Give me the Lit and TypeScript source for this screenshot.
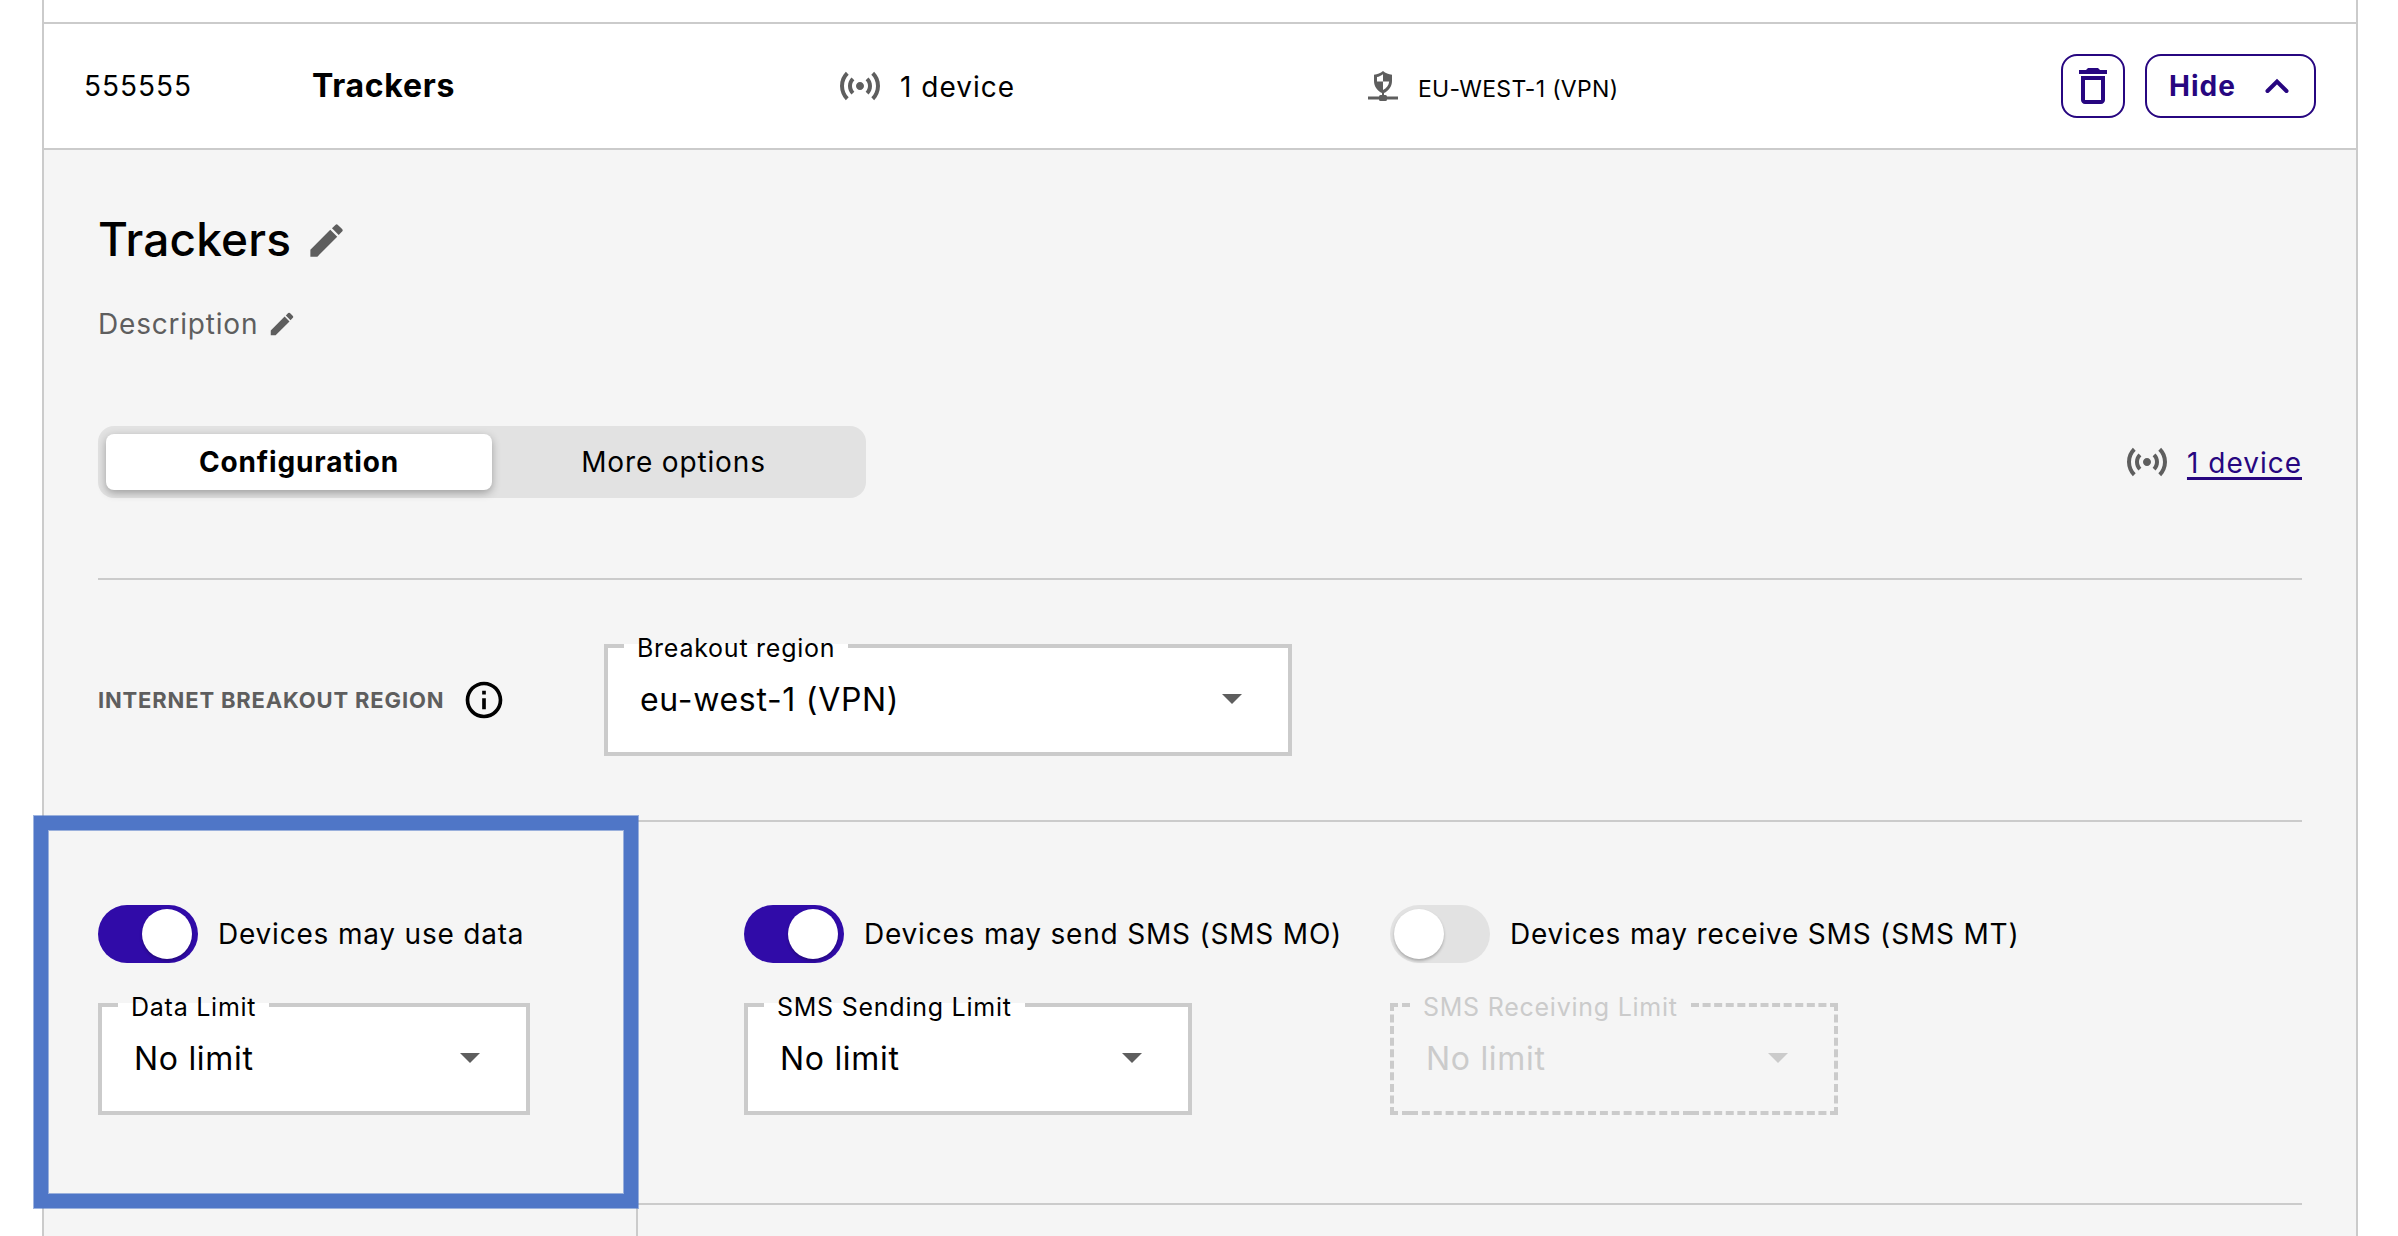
import { LitElement, html, css, svg } from "lit";
import { customElement, property } from "lit/decorators.js";

const sensors = svg`<path d="M7.76 16.24C6.67 15.16 6 13.66 6 12s.67-3.16 1.76-4.24l1.42 1.42C8.45 9.9 8 10.9 8 12c0 1.1.45 2.1 1.17 2.83l-1.41 1.41zm8.48 0C17.33 15.16 18 13.66 18 12s-.67-3.16-1.76-4.24l-1.42 1.42C15.55 9.9 16 10.9 16 12c0 1.1-.45 2.1-1.17 2.83l1.41 1.41zM12 10c-1.1 0-2 .9-2 2s.9 2 2 2 2-.9 2-2-.9-2-2-2zm8 2c0 2.21-.9 4.21-2.35 5.65l1.42 1.42C20.88 17.26 22 14.76 22 12s-1.12-5.26-2.93-7.07l-1.42 1.42C19.1 7.79 20 9.79 20 12zM6.35 6.35L4.93 4.93C3.12 6.74 2 9.24 2 12s1.12 5.26 2.93 7.07l1.42-1.42C4.9 16.21 4 14.21 4 12s.9-4.21 2.35-5.65z"/>`;
const pencil = svg`<path d="M3 17.1V21h3.9L18 9.9l-3.9-3.9L3 17.100zM20.710 7.040a1 1 0 0 0 0-1.410l-2.340-2.340a1 1 0 0 0-1.410 0l-1.900 1.900 3.750 3.750 1.900-1.900z"/>`;

@customElement("limit-select")
export class LimitSelect extends LitElement {
  @property() label = "";
  @property() value = "";
  @property({ type: Boolean, reflect: true }) disabled = false;
  static styles = css`
    :host { display: grid; height: 112px; background: #fff; color: #000; --line: 4px solid #cbcbcb; }
    :host([disabled]) { background: transparent; color: #cbcbcb; --line: 4px dashed #cbcbcb; }
    .outline, .content { grid-area: 1 / 1; box-sizing: border-box; display: flex; }
    .lead { width: 20px; box-sizing: border-box; border: var(--line); border-right: none; }
    .notch { padding: 0 13px; border-bottom: var(--line); font-size: 25px; line-height: 32px; letter-spacing: 0.75px; white-space: nowrap; }
    .notch span { display: block; margin-top: -12px; }
    .trail { flex: 1; border: var(--line); border-left: none; }
    .content { align-items: center; justify-content: space-between; padding: 0 50px 0 36px; font-size: 32px; line-height: 40px; letter-spacing: 0.7px; }
    .arrow { width: 20px; height: 10px; margin-top: -2px; fill: #5e5e5e; }
    :host([disabled]) .arrow { fill: #cbcbcb; }
  `;
  render() {
    return html`
      <div class="outline"><div class="lead"></div><div class="notch"><span>${this.label}</span></div><div class="trail"></div></div>
      <div class="content"><span>${this.value}</span><svg class="arrow" viewBox="0 0 20 10"><path d="M0 0h20L10 10z"/></svg></div>`;
  }
}

@customElement("toggle-switch")
export class ToggleSwitch extends LitElement {
  @property({ type: Boolean, reflect: true }) on = false;
  static styles = css`
    :host { display: flex; box-sizing: border-box; width: 100px; height: 58px; padding: 4px 6px 4px 4px; border-radius: 29px; background: #e2e2e2; }
    :host([on]) { background: #300ba8; justify-content: flex-end; }
    .knob { width: 50px; height: 50px; border-radius: 50%; background: #fff; box-shadow: 0 2px 3px rgba(0, 0, 0, 0.25); }
  `;
  render() {
    return html`<div class="knob"></div>`;
  }
}

@customElement("app-root")
export class AppRoot extends LitElement {
  static styles = css`
    :host { display: block; position: relative; height: 1236px; overflow: hidden; background: #fff; color: #000; font-family: Inter, "Liberation Sans", sans-serif; font-size: 28px; line-height: 40px; letter-spacing: 1px; }
    svg { display: block; flex: none; }
    .card { box-sizing: border-box; width: 2316px; height: 1236px; margin-left: 42px; border: solid #cbcbcb; border-width: 0 2px; display: flex; flex-direction: column; }
    .previous { height: 22px; }
    .summary { box-sizing: border-box; height: 128px; border: solid #cbcbcb; border-width: 2px 0; padding: 0 40px; display: grid; grid-template-columns: 228px 524px 532px 1fr; align-items: center; }
    .name { font-weight: 700; font-size: 32px; letter-spacing: 0.7px; }
    .cell { display: flex; align-items: center; }
    .i48 { width: 48px; height: 48px; }
    .grey { fill: #5e5e5e; }
    .count { margin-left: 16px; padding-top: 1px; }
    .region { margin-left: 20px; font-size: 23px; letter-spacing: 0.3px; padding-top: 5px; }
    .actions { flex: 1; display: flex; justify-content: flex-end; gap: 20px; }
    .btn { box-sizing: border-box; height: 64px; border: 2px solid #270680; border-radius: 16px; display: flex; align-items: center; color: #270680; font-weight: 700; letter-spacing: 1px; }
    .btn svg { fill: #270680; }
    .trash { width: 64px; justify-content: center; }
    .hide { width: 171px; padding: 0 25px 0 22px; justify-content: space-between; }
    .chev { width: 24px; height: 16px; }
    .panel { flex: 1; background: #f5f5f5; padding-top: 59px; display: flex; flex-direction: column; }
    .title { margin-left: 54px; height: 60px; display: flex; align-items: center; font-size: 46px; line-height: 60px; font-weight: 500; letter-spacing: 0.15px; gap: 14px; }
    .i43 { width: 43px; height: 43px; margin-top: 3px; }
    .i30 { width: 30px; height: 30px; }
    .desc { margin: 35px 0 0 54px; height: 40px; display: flex; align-items: center; gap: 9px; color: #5e5e5e; letter-spacing: 0.8px; }
    .bar { margin: 82px 54px 0; height: 152px; border-bottom: 2px solid #cbcbcb; display: flex; justify-content: space-between; align-items: flex-start; }
    .tabs { box-sizing: border-box; width: 768px; height: 72px; border-radius: 16px; background: #e2e2e2; padding: 8px; display: flex; letter-spacing: 0.85px; }
    .tab { flex: 1; display: flex; align-items: center; justify-content: center; padding-right: 3px; }
    .active { flex: none; box-sizing: border-box; width: 386px; padding: 0; border-radius: 8px; background: #fff; font-weight: 700; box-shadow: 0 3px 8px rgba(0, 0, 0, 0.3); }
    .link { display: flex; align-items: center; height: 72px; gap: 16px; color: #270680; }
    .link a { margin-top: 2px; text-decoration: underline; text-decoration-thickness: 3px; text-underline-offset: 4px; text-decoration-skip-ink: none; }
    .breakout { margin: 0 54px; height: 240px; border-bottom: 2px solid #cbcbcb; display: flex; align-items: center; }
    .caption { font-size: 22px; font-weight: 700; color: #5e5e5e; width: 364px; letter-spacing: 0.83px; white-space: nowrap; }
    .info { width: 44px; height: 44px; margin-right: 98px; }
    .w688 { width: 688px; }
    .limits { height: 381px; box-sizing: border-box; margin: 0 54px; padding-top: 83px; display: grid; grid-template-columns: 646px 646px 1fr; }
    .switch { display: flex; align-items: center; gap: 20px; height: 58px; margin-bottom: 40px; letter-spacing: 0.8px; }
    .w432 { width: 432px; }
    .w448 { width: 448px; }
    .next { flex: 1; margin-right: 54px; border-top: 2px solid #cbcbcb; margin-left: 592px; border-left: 2px solid #cbcbcb; }
    .highlight { position: absolute; left: 34px; top: 816px; box-sizing: border-box; width: 604px; height: 392px; border: 14px solid #4f76c7; box-shadow: 0 0 0 1px rgba(79, 118, 199, 0.55), inset 0 0 0 1px rgba(79, 118, 199, 0.55); }
  `;

  render() {
    return html`
      <div class="card">
        <div class="previous"></div>
        <div class="summary">
          <span>555555</span>
          <span class="name">Trackers</span>
          <div class="cell"><svg class="i48 grey" viewBox="0 0 24 24">${sensors}</svg><span class="count">1 device</span></div>
          <div class="cell">
            <svg width="30" height="30" viewBox="0 0 30 30" class="grey">
              <path fill-rule="evenodd" d="M15 0C17.500 2.200 20.500 3.400 24 3.800V10C24 15.500 20.500 20 16 22V24H17.500Q19 24 19 25.500H30V28.500H19Q19 30 17.500 30H12.500Q11 30 11 28.500H0V25.500H11Q11 24 12.500 24H14V22C9.500 20 6 15.500 6 10V3.800C9.500 3.400 12.500 2.200 15 0ZM15 3.200C13 4.700 11 5.600 9 6V10.500H15ZM15 10.500V19C18.500 17.200 20.800 14.200 21.200 10.500Z"/>
            </svg>
            <span class="region">EU-WEST-1 (VPN)</span>
            <div class="actions">
              <div class="btn trash"><svg class="i48" viewBox="0 0 24 24"><path d="M6 19c0 1.100.9 2 2 2h8c1.100 0 2-.9 2-2V7H6v12zM8 9h8v10H8V9zm7.500-5l-1-1h-5l-1 1H5v2h14V4z"/></svg></div>
              <div class="btn hide"><span>Hide</span><svg class="chev" viewBox="0 0 24 16"><path d="M2.500 13L12 3.500l9.500 9.500" fill="none" stroke="#270680" stroke-width="4" stroke-linecap="round"/></svg></div>
            </div>
          </div>
        </div>
        <div class="panel">
          <div class="title"><span>Trackers</span><svg class="i43 grey" viewBox="0 0 24 24">${pencil}</svg></div>
          <div class="desc"><span>Description</span><svg class="i30 grey" viewBox="0 0 24 24">${pencil}</svg></div>
          <div class="bar">
            <div class="tabs"><div class="tab active">Configuration</div><div class="tab">More options</div></div>
            <div class="link"><svg class="i48 grey" viewBox="0 0 24 24">${sensors}</svg><a>1 device</a></div>
          </div>
          <div class="breakout">
            <span class="caption">INTERNET BREAKOUT REGION</span>
            <svg class="info" viewBox="0 0 24 24"><path d="M11 7h2v2h-2zm0 4h2v6h-2zm1-9C6.480 2 2 6.480 2 12s4.480 10 10 10 10-4.480 10-10S17.520 2 12 2zm0 18c-4.410 0-8-3.590-8-8s3.590-8 8-8 8 3.590 8 8-3.590 8-8 8z"/></svg>
            <limit-select class="w688" label="Breakout region" value="eu-west-1 (VPN)"></limit-select>
          </div>
          <div class="limits">
            <div>
              <div class="switch"><toggle-switch on></toggle-switch><span>Devices may use data</span></div>
              <limit-select class="w432" label="Data Limit" value="No limit"></limit-select>
            </div>
            <div>
              <div class="switch"><toggle-switch on></toggle-switch><span>Devices may send SMS (SMS MO)</span></div>
              <limit-select class="w448" label="SMS Sending Limit" value="No limit"></limit-select>
            </div>
            <div>
              <div class="switch"><toggle-switch></toggle-switch><span>Devices may receive SMS (SMS MT)</span></div>
              <limit-select class="w448" disabled label="SMS Receiving Limit" value="No limit"></limit-select>
            </div>
          </div>
          <div class="next"></div>
        </div>
      </div>
      <div class="highlight"></div>`;
  }
}
